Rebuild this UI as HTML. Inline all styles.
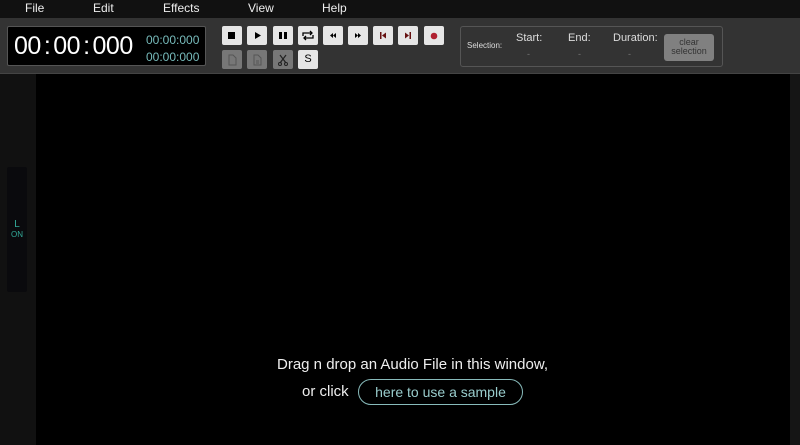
<!DOCTYPE html>
<html><head><style>
body{margin:0;width:800px;height:445px;overflow:hidden;background:#000;font-family:"Liberation Sans",sans-serif;position:relative}
.a{position:absolute}
.menu{left:0;top:0;width:800px;height:18px;background:#111;color:#eee;font-size:12px}
.menu span{position:absolute;top:1px}
.tb{left:0;top:18px;width:800px;height:55px;background:#333;border-bottom:1px solid #444}
.timer{left:7px;top:26px;width:197px;height:38px;background:#000;border:1px solid #555;border-radius:2px}
.btn{position:absolute;width:20px;height:19px;background:#e6e6e6;border-radius:2px}
.btn svg{position:absolute;left:0;top:0}
.sel{left:460px;top:26px;width:261px;height:39px;border:1px solid #555;border-radius:3px;color:#ddd}
</style></head><body>
<div class="a menu"><span style="left:25px">File</span><span style="left:93px">Edit</span><span style="left:163px">Effects</span><span style="left:248px">View</span><span style="left:322px">Help</span></div>
<div class="a tb"></div>
<div class="a timer">
<div class="a" style="left:6px;top:5px;color:#fff;font-size:25px;white-space:nowrap;letter-spacing:-0.5px">00<span style="margin:0 3px">:</span>00<span style="margin:0 3px">:</span>000</div>
<div class="a" style="left:138px;top:5px;color:#7bb;font-size:12px;line-height:17px">00:00:000<br>00:00:000</div>
</div>
<div class="btn" style="left:222px;top:26px"><svg width="20" height="19"><rect x="6" y="6" width="7" height="7" fill="#000"/></svg></div>
<div class="btn" style="left:247px;top:26px"><svg width="20" height="19"><path d="M8 6l6 3.5-6 3.5z" fill="#000"/></svg></div>
<div class="btn" style="left:273px;top:26px"><svg width="20" height="19"><rect x="6" y="6" width="3" height="7"/><rect x="11" y="6" width="3" height="7"/></svg></div>
<div class="btn" style="left:298px;top:26px"><svg width="20" height="19"><path d="M5 10V7h9M12 5l2 2-2 2M15 9v3H6M8 14l-2-2 2-2" stroke="#000" stroke-width="1.3" fill="none"/></svg></div>
<div class="btn" style="left:323px;top:26px"><svg width="20" height="19"><path d="M10 7l-3 2.5 3 2.5zM13 7l-3 2.5 3 2.5z"/></svg></div>
<div class="btn" style="left:348px;top:26px"><svg width="20" height="19"><path d="M7 7l3 2.5-3 2.5zM10 7l3 2.5-3 2.5z"/></svg></div>
<div class="btn" style="left:373px;top:26px"><svg width="20" height="19"><rect x="7" y="6" width="1.5" height="7" fill="#611"/><path d="M13 6.5l-4 3 4 3z" fill="#611"/></svg></div>
<div class="btn" style="left:398px;top:26px"><svg width="20" height="19"><rect x="11.5" y="6" width="1.5" height="7" fill="#611"/><path d="M7 6.5l4 3-4 3z" fill="#611"/></svg></div>
<div class="btn" style="left:424px;top:26px"><svg width="20" height="19"><circle cx="10" cy="10" r="3.3" fill="#b02030"/></svg></div>
<div class="btn" style="left:222px;top:50px;background:#777"><svg width="20" height="19"><path d="M7 5h4l3 3v7H7z" fill="none" stroke="#555"/></svg></div>
<div class="btn" style="left:247px;top:50px;background:#777"><svg width="20" height="19"><path d="M7 5h4l3 3v7H7z M9 11h3M9 13h3" fill="none" stroke="#555"/></svg></div>
<div class="btn" style="left:273px;top:50px;background:#777"><svg width="20" height="19"><path d="M7 5l6 8M13 5l-6 8" stroke="#222" stroke-width="1.2"/><circle cx="7" cy="14" r="1.5" fill="none" stroke="#222"/><circle cx="13" cy="14" r="1.5" fill="none" stroke="#222"/></svg></div>
<div class="btn" style="left:298px;top:50px;font-size:11px;text-align:center;line-height:19px">S</div>
<div class="a sel">
<div class="a" style="left:6px;top:14px;font-size:8px">Selection:</div>
<div class="a" style="left:55px;top:5px;font-size:11px">Start:</div>
<div class="a" style="left:107px;top:5px;font-size:11px">End:</div>
<div class="a" style="left:152px;top:5px;font-size:11px">Duration:</div>
<div class="a" style="left:66px;top:22px;font-size:9px;color:#777">-</div>
<div class="a" style="left:117px;top:22px;font-size:9px;color:#777">-</div>
<div class="a" style="left:167px;top:22px;font-size:9px;color:#777">-</div>
<div class="a" style="left:203px;top:7px;width:50px;height:27px;background:#808080;border-radius:3px;color:#333;font-size:9px;text-align:center;line-height:9px;padding-top:4px;box-sizing:border-box">clear<br>selection</div>
</div>
<div class="a" style="left:0;top:74px;width:36px;height:371px;background:#111"></div>
<div class="a" style="left:7px;top:167px;width:20px;height:125px;background:#0a0a0d;border-radius:2px;color:#3a9;text-align:center">
<div style="margin-top:52px;font-size:10px;line-height:11px">L</div><div style="font-size:8px">ON</div></div>
<div class="a" style="left:790px;top:74px;width:10px;height:371px;background:#151515"></div>
<div class="a" style="left:0;top:356px;width:825px;text-align:center;color:#eee;font-size:15px">Drag n drop an Audio File in this window,</div>
<div class="a" style="left:302px;top:383px;color:#eee;font-size:15px">or click</div>
<div class="a" style="left:358px;top:379px;width:163px;height:24px;border:1px solid #8bb;border-radius:13px;color:#9cc;font-size:14px;text-align:center;line-height:24px">here to use a sample</div>
</body></html>
